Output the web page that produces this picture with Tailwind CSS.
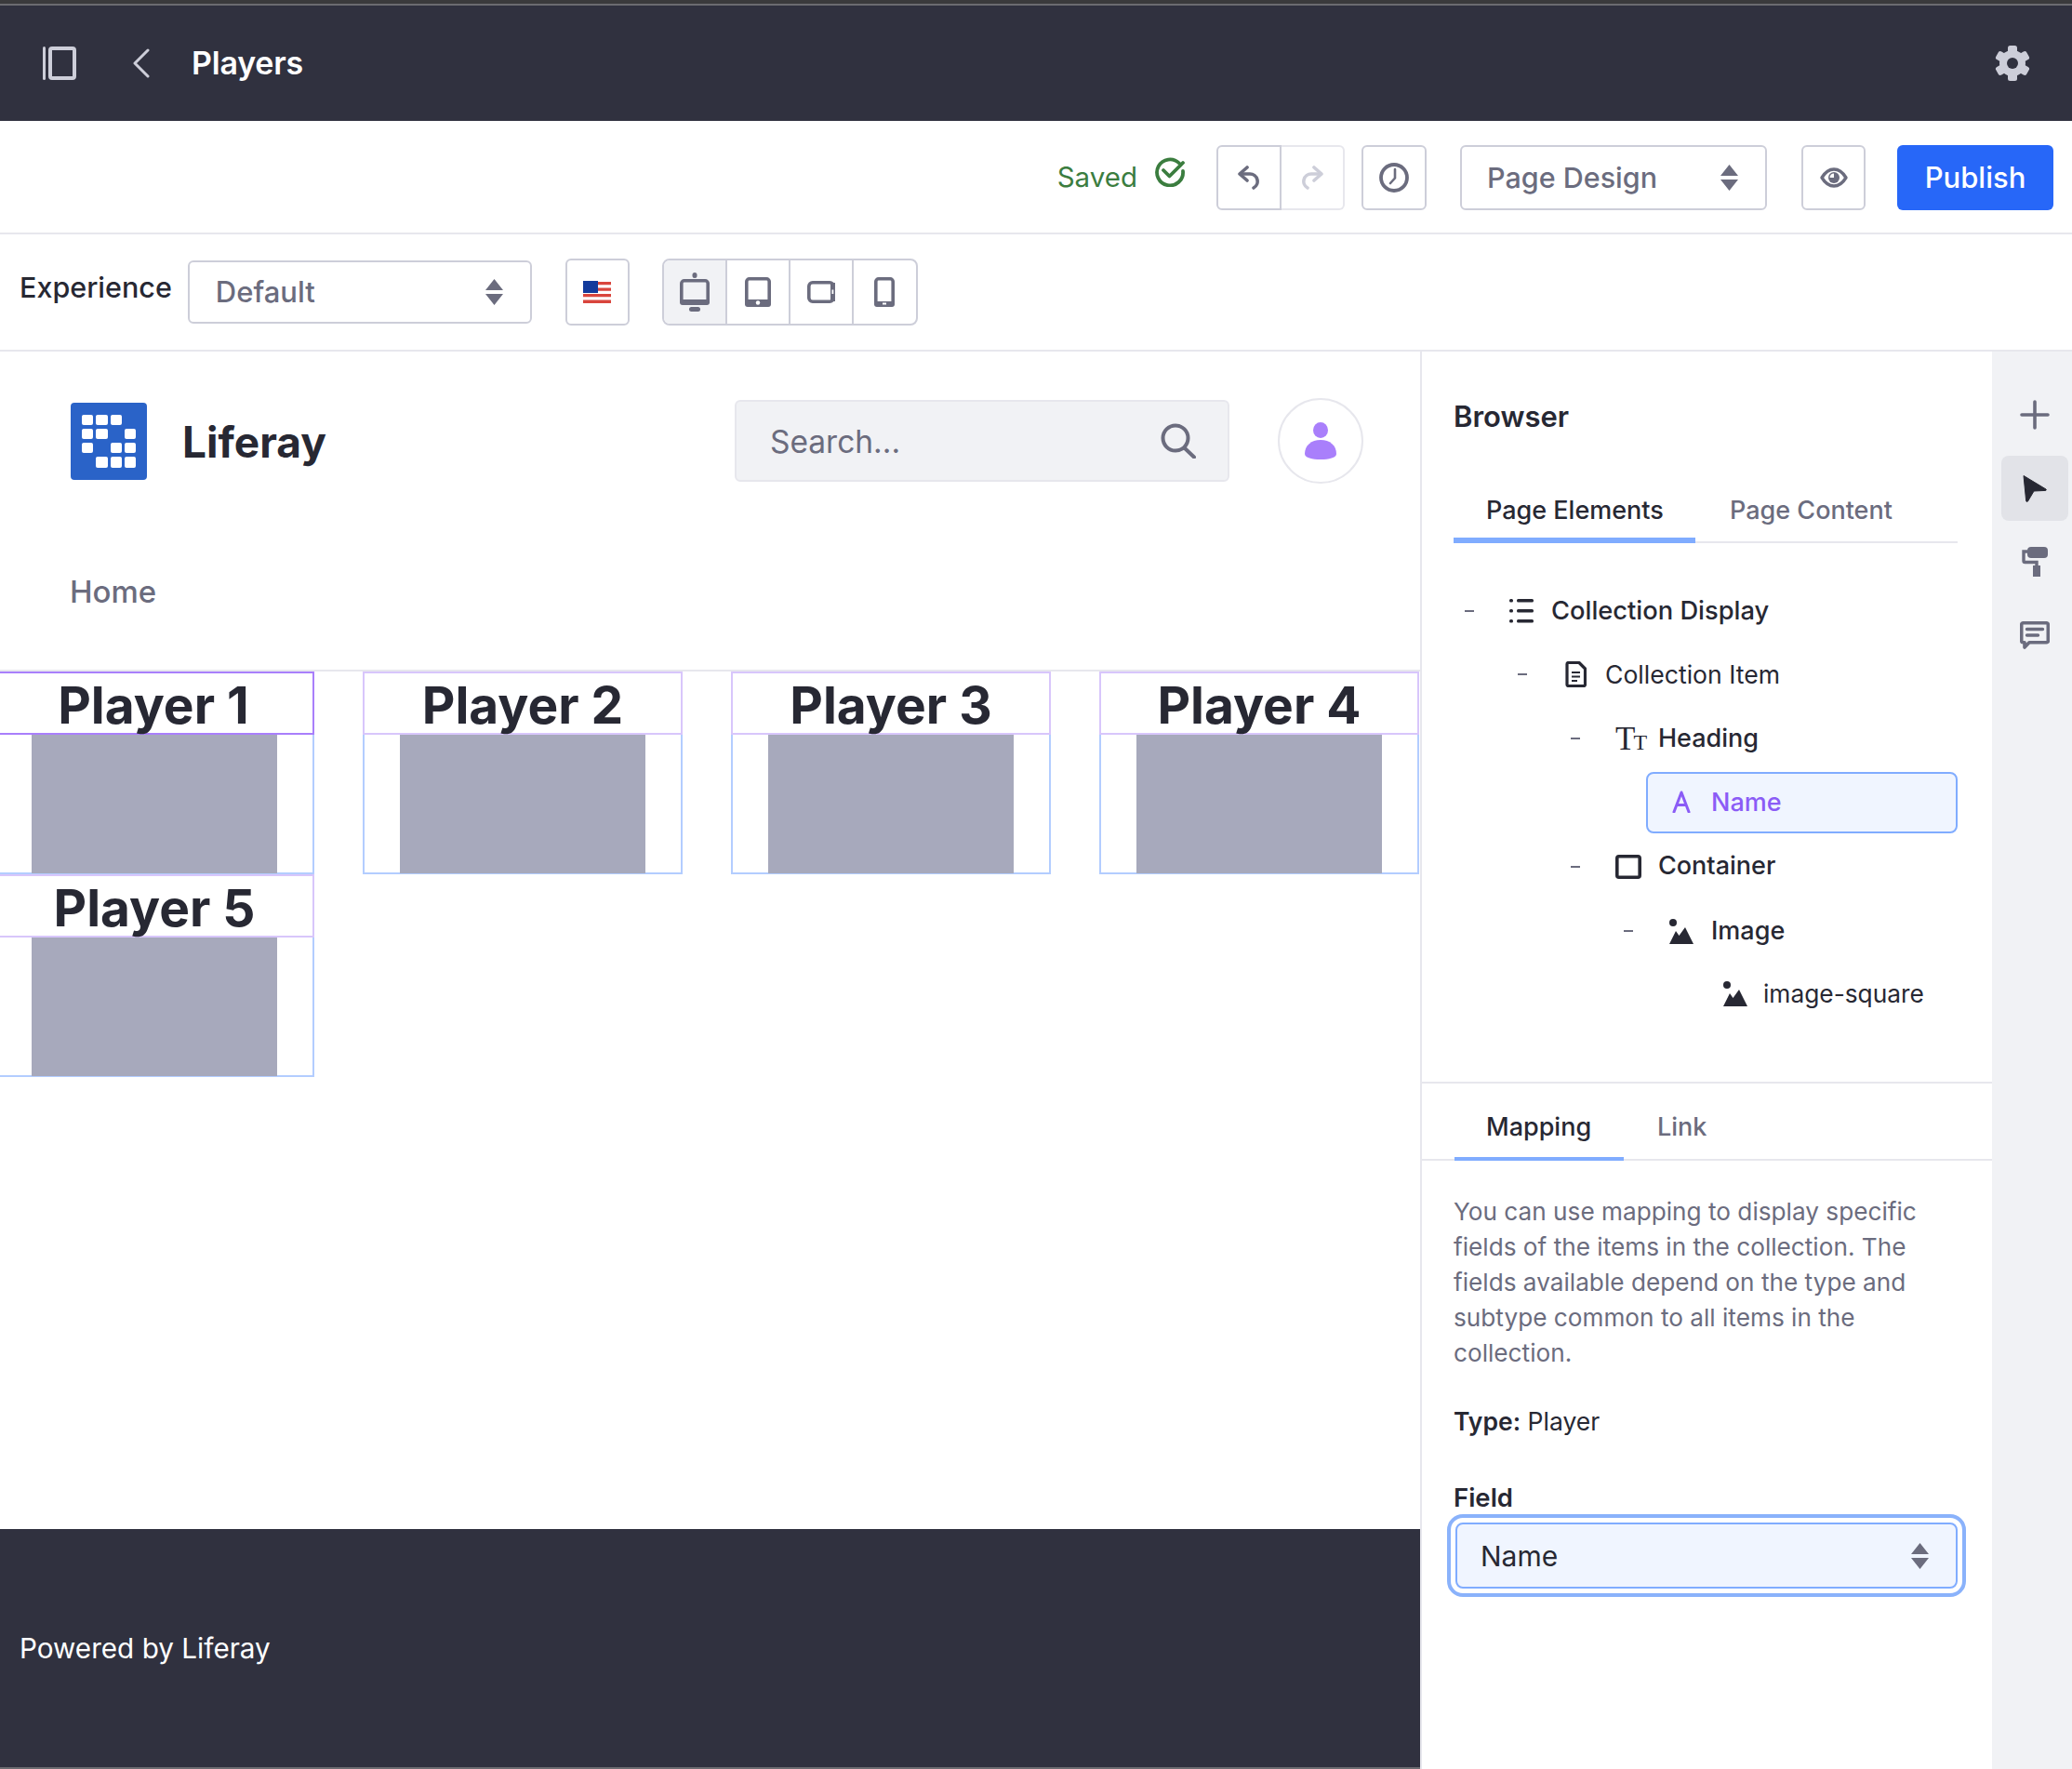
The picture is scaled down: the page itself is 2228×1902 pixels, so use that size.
<!DOCTYPE html>
<html lang="en">
	<head>
		<meta charset="UTF-8" />
		<meta name="viewport" content="width=device-width, initial-scale=1.0" />
		<title>Players</title>
		<script src="https://cdn.jsdelivr.net/npm/@tailwindcss/browser@4"></script>
	</head>
	<body class="bg-white text-[#272833] font-['Inter',sans-serif] overflow-hidden">
		<div class="w-[2228px] h-[1902px] flex flex-col">
			<!-- top bar -->
			<header class="h-[130px] shrink-0 bg-[#30313f] border-t-[4px] border-[#3a3a3c] relative flex items-center pl-[46px] pr-[45px] text-white">
				<div class="absolute left-0 right-0 top-0 h-[2px] bg-[#6b6b70]"></div>
				<svg class="w-[36px] h-[36px] mt-[2px]" viewBox="0 0 36 36" fill="none"><rect x="0" y="0" width="3" height="36" rx="1.5" fill="#cdced9"/><rect x="8" y="2" width="26" height="32" rx="2" stroke="#cdced9" stroke-width="4"/></svg>
				<svg class="w-[18px] h-[32px] ml-[61px] mt-[2px]" viewBox="0 0 18 32" fill="none"><path d="M16 2 2 16l14 14" stroke="#cdced9" stroke-width="3" stroke-linecap="round" stroke-linejoin="round"/></svg>
				<span class="ml-[45px] mt-[2px] text-[34px] font-semibold leading-none tracking-[-0.2px]">Players</span>
				<svg class="w-[38px] h-[38px] ml-auto mt-[2px]" viewBox="0 0 38 38"><g fill="#cdced9"><rect x="14" y="0" width="10" height="38" rx="2.5"/><rect x="14" y="0" width="10" height="38" rx="2.5" transform="rotate(60 19 19)"/><rect x="14" y="0" width="10" height="38" rx="2.5" transform="rotate(120 19 19)"/><circle cx="19" cy="19" r="14"/></g><circle cx="19" cy="19" r="6" fill="#30313f"/></svg>
			</header>

			<!-- save toolbar -->
			<div class="h-[122px] shrink-0 border-b-2 border-[#e7e7ed] flex items-start pt-[26px] pr-[20px] justify-end">
				<span class="text-[29.5px] leading-[70px] -mt-[1px] text-[#3b7d3f]">Saved</span>
				<svg class="w-[34px] h-[32px] ml-[18px] mt-[13px]" viewBox="0 0 34 32" fill="none"><path d="M27 6.5A14 14 0 1 0 31 15" stroke="#3b7d3f" stroke-width="3.8" stroke-linecap="round"/><path d="M10 14l6.5 6.5L31 6" stroke="#3b7d3f" stroke-width="3.8" stroke-linecap="round" stroke-linejoin="round"/></svg>
				<div class="ml-[33px] flex h-[70px]">
					<button class="w-[70px] h-full border-2 border-[#cdced9] rounded-l-[6px] flex items-center justify-center">
						<svg class="w-[24px] h-[26px]" viewBox="0 0 24 26" fill="none"><path d="M10 2 2 9l8 7" stroke="#6b6c7e" stroke-width="3.6" stroke-linecap="round" stroke-linejoin="round"/><path d="M3 9h10a8 8 0 0 1 4 15" stroke="#6b6c7e" stroke-width="3.6" stroke-linecap="round"/></svg>
					</button>
					<button class="w-[68px] h-full border-2 border-l-0 border-[#e7e7ed] rounded-r-[6px] flex items-center justify-center">
						<svg class="w-[24px] h-[26px]" viewBox="0 0 24 26" fill="none"><path d="M14 2l8 7-8 7" stroke="#cdced9" stroke-width="3.6" stroke-linecap="round" stroke-linejoin="round"/><path d="M21 9H11a8 8 0 0 0-4 15" stroke="#cdced9" stroke-width="3.6" stroke-linecap="round"/></svg>
					</button>
				</div>
				<button class="ml-[18px] w-[70px] h-[70px] border-2 border-[#cdced9] rounded-[6px] flex items-center justify-center">
					<svg class="w-[32px] h-[32px]" viewBox="0 0 32 32" fill="none"><circle cx="16" cy="16" r="14" stroke="#6b6c7e" stroke-width="3.8"/><path d="M17 7v9.5L12 22" stroke="#6b6c7e" stroke-width="2.6" stroke-linecap="round" stroke-linejoin="round"/></svg>
				</button>
				<div class="ml-[36px] w-[330px] h-[70px] border-2 border-[#cdced9] rounded-[6px] flex items-center pl-[27px] pr-[29px] text-[30.5px] font-medium text-[#6b6c7e]">
					<span>Page Design</span>
					<svg class="w-[19px] h-[28px] ml-auto" viewBox="0 0 19 28"><path d="M9.5 0 19 12H0zM0 16h19l-9.5 12z" fill="#6b6c7e"/></svg>
				</div>
				<button class="ml-[37px] w-[69px] h-[70px] border-2 border-[#cdced9] rounded-[6px] flex items-center justify-center">
					<svg class="w-[30px] h-[22px]" viewBox="0 0 30 22" fill="none"><path d="M2 11C6 4.5 10 2 15 2s9 2.5 13 9c-4 6.5-8 9-13 9S6 17.5 2 11Z" stroke="#6b6c7e" stroke-width="3.4" stroke-linejoin="round"/><circle cx="15" cy="11" r="6" fill="#6b6c7e"/><path d="M15 11V6.500A4.500 4.500 0 0 0 10.500 11Z" fill="#fff"/></svg>
				</button>
				<button class="ml-[34px] w-[168px] h-[70px] bg-[#2767f8] rounded-[6px] text-white text-[31px] font-medium">Publish</button>
			</div>

			<!-- experience toolbar -->
			<div class="h-[126px] shrink-0 border-b-2 border-[#e7e7ed] flex items-start pt-[26px] pl-[21px]">
				<span class="text-[30.5px] font-medium leading-[62px]">Experience</span>
				<div class="ml-[17px] mt-[2px] w-[370px] h-[68px] border-2 border-[#cdced9] rounded-[6px] flex items-center pl-[28px] pr-[29px] text-[31px] font-medium text-[#6b6c7e]">
					<span>Default</span>
					<svg class="w-[19px] h-[28px] ml-auto" viewBox="0 0 19 28"><path d="M9.5 0 19 12H0zM0 16h19l-9.5 12z" fill="#6b6c7e"/></svg>
				</div>
				<button class="ml-[36px] w-[69px] h-[72px] border-2 border-[#cdced9] rounded-[6px] flex items-center justify-center">
					<svg class="w-[30px] h-[24px]" viewBox="0 0 30 24"><rect width="30" height="24" fill="#fff"/><path d="M0 1h30v3.2H0zM0 7.5h30v3.2H0zM0 14h30v3.2H0zM0 20.4h30V24H0z" fill="#d9453d"/><rect width="16" height="13" fill="#123a9c"/></svg>
				</button>
				<div class="ml-[35px] h-[72px] flex border-2 border-[#cdced9] rounded-[8px] overflow-hidden">
					<div class="w-[68px] bg-[#f1f2f5] border-r-2 border-[#cdced9] flex items-center justify-center">
						<svg class="w-[32px] h-[42px]" viewBox="0 0 32 42"><rect x="13.5" y="0" width="5" height="6" rx="2.5" fill="#6b6c7e"/><rect x="1.800" y="8.800" width="28.400" height="24.400" rx="3" fill="none" stroke="#6b6c7e" stroke-width="3.6"/><rect x="0" y="29" width="32" height="6" rx="3" fill="#6b6c7e"/><rect x="10" y="37" width="12" height="5" rx="2.5" fill="#6b6c7e"/></svg>
					</div>
					<div class="w-[68px] border-r-2 border-[#cdced9] flex items-center justify-center">
						<svg class="w-[28px] h-[32px]" viewBox="0 0 28 32"><rect x="1.800" y="1.800" width="24.400" height="28.400" rx="3" fill="none" stroke="#6b6c7e" stroke-width="3.6"/><rect x="0" y="24" width="28" height="8" rx="3" fill="#6b6c7e"/><circle cx="14" cy="27.500" r="2.2" fill="#fff"/></svg>
					</div>
					<div class="w-[68px] border-r-2 border-[#cdced9] flex items-center justify-center">
						<svg class="w-[30px] h-[24px]" viewBox="0 0 30 24"><rect x="1.800" y="1.800" width="26.400" height="20.400" rx="4" fill="none" stroke="#6b6c7e" stroke-width="3.6"/><rect x="25" y="2" width="5" height="20" fill="#6b6c7e"/><rect x="26.500" y="9.5" width="1.8" height="4.5" fill="#fff"/></svg>
					</div>
					<div class="w-[67px] flex items-center justify-center">
						<svg class="w-[22px] h-[32px]" viewBox="0 0 22 32"><rect x="1.800" y="1.800" width="18.400" height="28.400" rx="3" fill="none" stroke="#6b6c7e" stroke-width="3.6"/><rect x="0" y="26" width="22" height="6" rx="3" fill="#6b6c7e"/><rect x="9" y="27.5" width="4" height="2" fill="#fff"/></svg>
					</div>
				</div>
			</div>

			<div class="flex-1 flex min-h-0">
				<!-- page canvas -->
				<main class="w-[1527px] shrink-0 flex flex-col overflow-hidden">
					<div class="h-[192px] shrink-0 flex items-center pl-[76px]">
						<div class="w-[82px] h-[83px] bg-[#2a63c8] rounded-[4px] grid grid-cols-4 grid-rows-4 gap-x-[3px] gap-y-[4px] px-[12px] py-[13px]">
							<i class="bg-white rounded-[2px]"></i><i class="bg-white rounded-[2px]"></i><i class="bg-white rounded-[2px]"></i><i></i>
							<i class="bg-white rounded-[2px]"></i><i class="bg-white rounded-[2px]"></i><i></i><i class="bg-white rounded-[2px]"></i>
							<i class="bg-white rounded-[2px]"></i><i></i><i class="bg-white rounded-[2px]"></i><i class="bg-white rounded-[2px]"></i>
							<i></i><i class="bg-white rounded-[2px]"></i><i class="bg-white rounded-[2px]"></i><i class="bg-white rounded-[2px]"></i>
						</div>
						<span class="ml-[38px] mt-[2px] text-[46px] font-bold leading-none">Liferay</span>
						<div class="ml-[439px] w-[532px] h-[88px] bg-[#f1f2f5] border-2 border-[#e7e7ed] rounded-[6px] flex items-center pl-[36px] pr-[34px] text-[33.5px] text-[#6b6c7e]">
							<span class="mt-[2px]">Search...</span>
							<svg class="w-[38px] h-[38px] ml-auto" viewBox="0 0 38 38" fill="none"><circle cx="16" cy="16" r="13.5" stroke="#6b6c7e" stroke-width="4"/><path d="M26 27l10 9.5" stroke="#6b6c7e" stroke-width="4" stroke-linecap="round"/></svg>
						</div>
						<div class="ml-[52px] w-[92px] h-[92px] rounded-full border-2 border-[#e7e7ed] flex items-center justify-center">
							<svg class="w-[34px] h-[40px]" viewBox="0 0 34 40"><ellipse cx="17" cy="8.5" rx="8" ry="8.5" fill="#a97ffb"/><path d="M17 19c10 0 17 6 17 15 0 4-8 6-17 6S0 38 0 34c0-9 7-15 17-15Z" fill="#a97ffb"/></svg>
						</div>
					</div>
					<nav class="h-[152px] shrink-0 border-b-2 border-[#e7e7ed] pl-[75px] pb-[16px] flex items-center text-[33px] font-medium text-[#6b6c7e]">Home</nav>

					<!-- collection display -->
					<div class="w-[1532px] -ml-[6px] grid grid-cols-4 gap-x-[52px]">
						<div>
							<h2 class="h-[68px] border-2 border-[#a97ffb] text-center text-[55px] font-bold leading-[68px] pr-[2px]">Player 1</h2>
							<div class="h-[150px] border-x-2 border-b-2 border-[#b3cdff] flex justify-center"><div class="w-[264px] -mb-[1px] bg-[#a7a9bc]"></div></div>
						</div>
						<div>
							<h2 class="h-[68px] border-2 border-[#d8c6fb] text-center text-[55px] font-bold leading-[68px]">Player 2</h2>
							<div class="h-[150px] border-x-2 border-b-2 border-[#b3cdff] flex justify-center"><div class="w-[264px] -mb-[1px] bg-[#a7a9bc]"></div></div>
						</div>
						<div>
							<h2 class="h-[68px] border-2 border-[#d8c6fb] text-center text-[55px] font-bold leading-[68px]">Player 3</h2>
							<div class="h-[150px] border-x-2 border-b-2 border-[#b3cdff] flex justify-center"><div class="w-[264px] -mb-[1px] bg-[#a7a9bc]"></div></div>
						</div>
						<div>
							<h2 class="h-[68px] border-2 border-[#d8c6fb] text-center text-[55px] font-bold leading-[68px]">Player 4</h2>
							<div class="h-[150px] border-x-2 border-b-2 border-[#b3cdff] flex justify-center"><div class="w-[264px] -mb-[1px] bg-[#a7a9bc]"></div></div>
						</div>
						<div>
							<h2 class="h-[68px] border-2 border-[#d8c6fb] text-center text-[55px] font-bold leading-[68px]">Player 5</h2>
							<div class="h-[150px] border-x-2 border-b-2 border-[#b3cdff] flex justify-center"><div class="w-[264px] -mb-[1px] bg-[#a7a9bc]"></div></div>
						</div>
					</div>

					<footer class="mt-auto h-[258px] shrink-0 bg-[#30313f] border-b-2 border-[#6b6b70] flex items-center pl-[21px] text-white text-[29.7px]">Powered by Liferay</footer>
				</main>

				<!-- browser panel -->
				<aside class="w-[615px] shrink-0 border-l-2 border-[#e7e7ed] flex flex-col">
					<div class="h-[787px] shrink-0 border-b-2 border-[#e7e7ed] pl-[34px] pr-[35px] pt-[50px]">
						<h3 class="text-[31px] font-semibold leading-[40px]">Browser</h3>
						<div class="mt-[54px] h-[62px] flex border-b-2 border-[#e7e7ed] w-[542px] text-[27px] font-medium leading-[53px]">
							<div class="w-[260px] h-[62px] pl-[35px] border-b-[6px] border-[#80acff] -mb-[2px] shrink-0">Page Elements</div>
							<div class="ml-[37px] text-[#6b6c7e]">Page Content</div>
						</div>
						<ul class="mt-[39px] text-[27px] leading-[68.6px]">
							<li class="flex items-center h-[68.6px] font-medium text-[27.3px]">
								<span class="w-[10px] h-[2px] ml-[12px] bg-[#6b6c7e]"></span>
								<svg class="w-[26px] h-[26px] ml-[38px]" viewBox="0 0 26 26"><g fill="#272833"><rect x="0" y="0" width="4" height="3.5" rx="1.5"/><rect x="8" y="0" width="18" height="3.5" rx="1.5"/><rect x="0" y="11" width="4" height="3.5" rx="1.5"/><rect x="8" y="11" width="18" height="3.5" rx="1.5"/><rect x="0" y="22" width="4" height="3.5" rx="1.5"/><rect x="8" y="22" width="18" height="3.5" rx="1.5"/></g></svg>
								<span class="ml-[19px]">Collection Display</span>
							</li>
							<li class="flex items-center h-[68.6px] text-[26.6px] -mt-[1px] mb-[1px]">
								<span class="w-[10px] h-[2px] ml-[69px] bg-[#6b6c7e]"></span>
								<svg class="w-[23px] h-[28px] ml-[41px]" viewBox="0 0 23 28" fill="none"><path d="M2 3a1.5 1.5 0 0 1 1.5-1.5H15L21.5 8v17a1.5 1.5 0 0 1-1.5 1.5H3.5A1.5 1.5 0 0 1 2 25Z" stroke="#272833" stroke-width="3.2" stroke-linejoin="round"/><path d="M7 12h9M7 16.5h9M7 21h6" stroke="#272833" stroke-width="2"/></svg>
								<span class="ml-[20px]">Collection Item</span>
							</li>
							<li class="flex items-center h-[68.6px] font-medium">
								<span class="w-[10px] h-[2px] ml-[126px] bg-[#6b6c7e]"></span>
								<span class="w-[28px] ml-[38px] font-['Liberation_Serif',serif] text-[#272833] leading-none whitespace-nowrap tracking-[-2px]"><span class="text-[35px]">T</span><span class="text-[24px]">T</span></span>
								<span class="ml-[18px]">Heading</span>
							</li>
							<li class="flex items-center h-[66px] ml-[207px] my-[1.3px] w-[335px] bg-[#f0f5ff] border-2 border-[#80acff] rounded-[8px] font-medium text-[#8b5cf6]">
								<svg class="w-[20px] h-[24px] ml-[26px] mb-[3px]" viewBox="0 0 20 24" fill="none"><path d="M2 23 10 2l8 21M5 15.5h10" stroke="#8b5cf6" stroke-width="3" stroke-linecap="round" stroke-linejoin="round"/></svg>
								<span class="ml-[22px]">Name</span>
							</li>
							<li class="flex items-center h-[68.6px] font-medium">
								<span class="w-[10px] h-[2px] ml-[126px] bg-[#6b6c7e]"></span>
								<svg class="w-[28px] h-[26px] ml-[38px]" viewBox="0 0 28 26" fill="none"><rect x="1.8" y="1.8" width="24.4" height="22.4" rx="2" stroke="#272833" stroke-width="3.6"/></svg>
								<span class="ml-[18px]">Container</span>
							</li>
							<li class="flex items-center h-[68.6px] font-medium mt-[1px] -mb-[1px]">
								<span class="w-[10px] h-[2px] ml-[183px] bg-[#6b6c7e]"></span>
								<svg class="w-[26px] h-[27px] ml-[39px]" viewBox="0 0 26 27"><circle cx="4" cy="4" r="4" fill="#272833"/><path d="M0 27 7 13l3.5 5L17 9l9 18Z" fill="#272833"/></svg>
								<span class="ml-[19px]">Image</span>
							</li>
							<li class="flex items-center h-[68.6px] text-[26.3px]">
								<svg class="w-[26px] h-[27px] ml-[290px]" viewBox="0 0 26 27"><circle cx="4" cy="4" r="4" fill="#272833"/><path d="M0 27 7 13l3.5 5L17 9l9 18Z" fill="#272833"/></svg>
								<span class="ml-[17px]">image-square</span>
							</li>
						</ul>
					</div>

					<div class="h-[83px] shrink-0 border-b-2 border-[#e7e7ed] pl-[35px] flex text-[27px] font-medium leading-[94px]">
						<div class="w-[182px] h-[83px] pl-[34px] border-b-[4px] border-[#80acff] -mb-[2px] shrink-0">Mapping</div>
						<div class="ml-[36px] text-[#6b6c7e]">Link</div>
					</div>

					<div class="pl-[34px] pr-[35px] pt-[36px]">
						<p class="w-[520px] text-[26.2px] leading-[38px] text-[#6b6c7e]">You can use mapping to display specific fields of the items in the collection. The fields available depend on the type and subtype common to all items in the collection.</p>
						<p class="mt-[36px] text-[26.5px] leading-[36px]"><b class="font-semibold">Type:</b> Player</p>
						<label class="block mt-[45px] text-[27.5px] font-semibold leading-[38px]">Field</label>
						<div class="ml-[2px] w-[540px] mt-[8px] h-[71px] bg-[#f0f5ff] border-2 border-[#80acff] rounded-[8px] flex items-center pl-[25px] pr-[29px] text-[30px] outline-[4px] outline-[#8ab2fb] outline-offset-[5px]">
							<span class="mt-[2px]">Name</span>
							<svg class="w-[19px] h-[28px] ml-auto" viewBox="0 0 19 28"><path d="M9.5 0 19 12H0zM0 16h19l-9.5 12z" fill="#6b6c7e"/></svg>
						</div>
					</div>
				</aside>

				<!-- side rail -->
				<nav class="flex-1 bg-[#f1f2f5] flex flex-col items-center pl-[6px]">
					<svg class="w-[32px] h-[32px] mt-[52px]" viewBox="0 0 32 32" fill="none"><path d="M16 2v28M2 16h28" stroke="#6b6c7e" stroke-width="3.6" stroke-linecap="round"/></svg>
					<div class="mt-[28px] w-[72px] h-[70px] bg-[#e2e3e8] rounded-[8px] flex items-center justify-center">
						<svg class="w-[26px] h-[30px]" viewBox="0 0 26 30"><path d="M1 1.5 25 16a.8.8 0 0 1-.4 1.4L12 18 5.5 29a1 1 0 0 1-1.800-.3Z" fill="#272833" stroke="#272833" stroke-linejoin="round"/></svg>
					</div>
					<svg class="w-[28px] h-[32px] mt-[28px]" viewBox="0 0 28 32" fill="none"><rect x="6" y="0" width="22" height="12" rx="4" fill="#6b6c7e"/><path d="M6 5H2v10a1.5 1.5 0 0 0 1.5 1.500H16V21" stroke="#6b6c7e" stroke-width="3.4"/><rect x="12" y="20" width="8" height="12" fill="#6b6c7e"/></svg>
					<svg class="w-[32px] h-[30px] mt-[48px]" viewBox="0 0 32 30" fill="none"><path d="M3.500 1.800h25a1.800 1.800 0 0 1 1.800 1.800V21a1.800 1.800 0 0 1-1.800 1.800H10L5 28v-5.200H3.500A1.800 1.800 0 0 1 1.700 21V3.600a1.800 1.800 0 0 1 1.800-1.800Z" stroke="#6b6c7e" stroke-width="3.6" stroke-linejoin="round"/><path d="M7.500 8.500h17M7.500 15h12" stroke="#6b6c7e" stroke-width="3.4" stroke-linecap="round"/></svg>
				</nav>
			</div>
		</div>
	</body>
</html>
